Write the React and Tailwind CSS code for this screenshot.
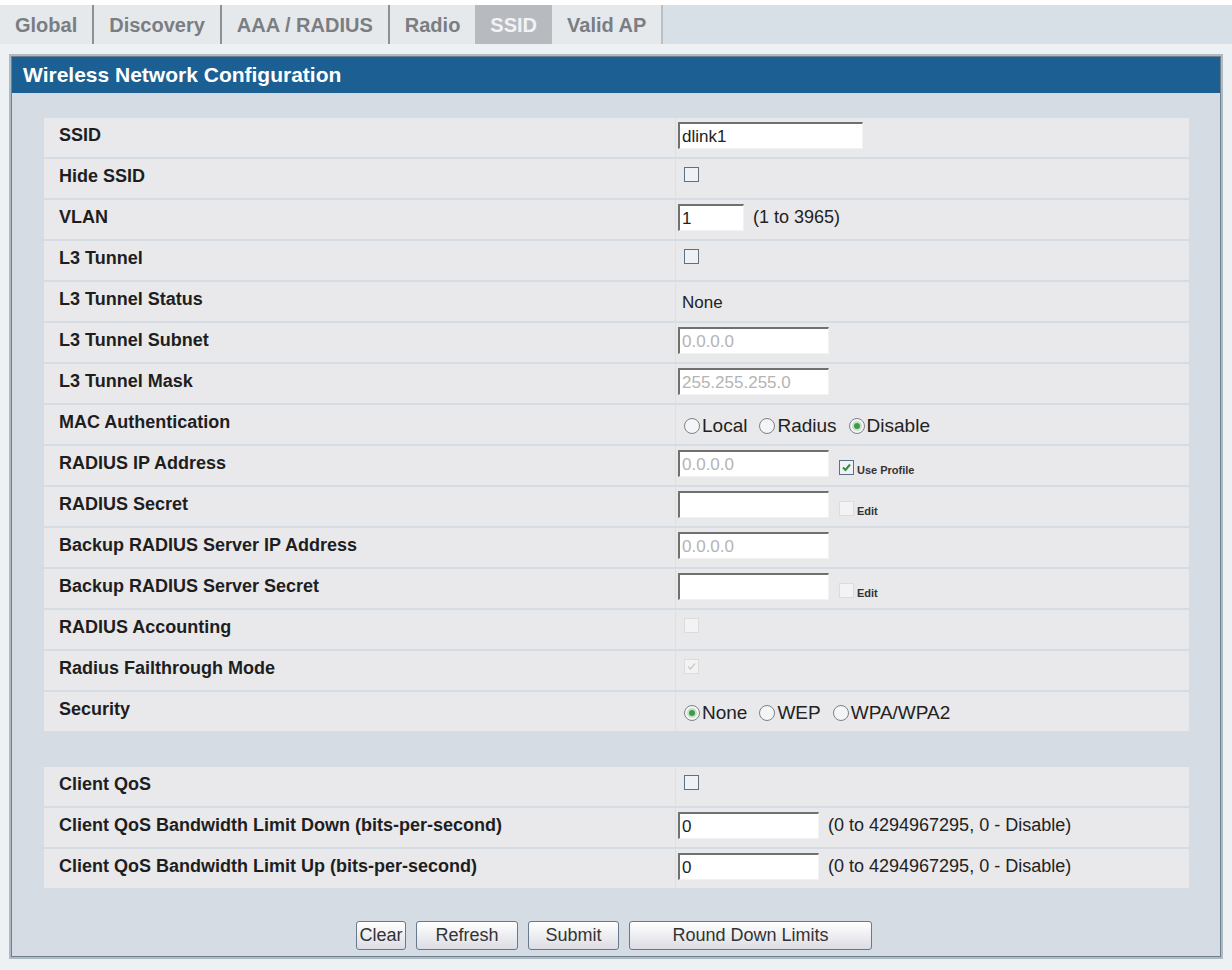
import React from 'react';

const tabs = ['Global', 'Discovery', 'AAA / RADIUS', 'Radio', 'SSID', 'Valid AP'];

// petits contrôles dessinés à la main pour garder le look "vieux navigateur"
const TextBox = ({ value, width, disabled }) => (
    <div
        className={`h-[27px] bg-white border-t-2 border-l-2 border-t-[#707070] border-l-[#707070] border-r border-b border-r-[#f2f2f2] border-b-[#f2f2f2] flex items-center pl-[2px] text-[17px] leading-none ${width} ${disabled ? 'text-[#b4b4b4]' : 'text-[#222]'}`}
    >
        {value}
    </div>
);

const CheckBox = ({ checked, disabled }) => (
    <div
        className={`w-[15px] h-[15px] border flex items-center justify-center ${disabled ? 'border-[#dcdcdc] bg-[#f3f3f3]' : 'border-[#5d7184] bg-[#eef2f5]'}`}
    >
        {checked && (
            <svg width="11" height="11" viewBox="0 0 11 11">
                <path
                    d="M2 5.5 L4.5 8 L9 2.5"
                    fill="none"
                    stroke={disabled ? '#c8c8c8' : '#2f8f3a'}
                    strokeWidth={disabled ? 1.2 : 2}
                />
            </svg>
        )}
    </div>
);

const Radio = ({ label, checked }) => (
    <div className="flex items-center mr-[12px]">
        <div className="w-[16px] h-[16px] rounded-full border border-[#7c8289] bg-[#f4f5f6] flex items-center justify-center mr-[2px]">
            {checked && <div className="w-[6px] h-[6px] rounded-full bg-[#3f9a4c] ring-2 ring-[#c5e3c9]" />}
        </div>
        <span className="text-[19px] text-[#222]">{label}</span>
    </div>
);

const Hint = ({ children }) => <span className="ml-[9px] text-[18px] text-[#222]">{children}</span>;

const Small = ({ children }) => (
    <span className="ml-[3px] mt-[6px] text-[11px] font-bold text-[#333]">{children}</span>
);

const rows = [
    { label: 'SSID', value: <TextBox value="dlink1" width="w-[185px]" /> },
    { label: 'Hide SSID', value: <div className="pl-[6px] pt-[4px]"><CheckBox /></div> },
    { label: 'VLAN', value: <><TextBox value="1" width="w-[66px]" /><Hint>(1 to 3965)</Hint></> },
    { label: 'L3 Tunnel', value: <div className="pl-[6px] pt-[4px]"><CheckBox /></div> },
    { label: 'L3 Tunnel Status', value: <span className="pl-[4px] pt-[4px] text-[17px] text-[#222]">None</span> },
    { label: 'L3 Tunnel Subnet', value: <TextBox value="0.0.0.0" width="w-[151px]" disabled /> },
    { label: 'L3 Tunnel Mask', value: <TextBox value="255.255.255.0" width="w-[151px]" disabled /> },
    {
        label: 'MAC Authentication',
        value: (
            <div className="flex items-center pl-[6px] pt-[3px]">
                <Radio label="Local" />
                <Radio label="Radius" />
                <Radio label="Disable" checked />
            </div>
        ),
    },
    {
        label: 'RADIUS IP Address',
        value: (
            <>
                <TextBox value="0.0.0.0" width="w-[151px]" disabled />
                <div className="ml-[10px] mt-[6px] flex items-center">
                    <CheckBox checked />
                    <Small>Use Profile</Small>
                </div>
            </>
        ),
    },
    {
        label: 'RADIUS Secret',
        value: (
            <>
                <TextBox value="" width="w-[151px]" />
                <div className="ml-[10px] mt-[6px] flex items-center">
                    <CheckBox disabled />
                    <Small>Edit</Small>
                </div>
            </>
        ),
    },
    { label: 'Backup RADIUS Server IP Address', value: <TextBox value="0.0.0.0" width="w-[151px]" disabled /> },
    {
        label: 'Backup RADIUS Server Secret',
        value: (
            <>
                <TextBox value="" width="w-[151px]" />
                <div className="ml-[10px] mt-[6px] flex items-center">
                    <CheckBox disabled />
                    <Small>Edit</Small>
                </div>
            </>
        ),
    },
    { label: 'RADIUS Accounting', value: <div className="pl-[6px] pt-[4px]"><CheckBox disabled /></div> },
    { label: 'Radius Failthrough Mode', value: <div className="pl-[6px] pt-[4px]"><CheckBox checked disabled /></div> },
    {
        label: 'Security',
        value: (
            <div className="flex items-center pl-[6px] pt-[3px]">
                <Radio label="None" checked />
                <Radio label="WEP" />
                <Radio label="WPA/WPA2" />
            </div>
        ),
    },
];

const qosRows = [
    { label: 'Client QoS', value: <div className="pl-[6px] pt-[4px]"><CheckBox /></div> },
    {
        label: 'Client QoS Bandwidth Limit Down (bits-per-second)',
        value: <><TextBox value="0" width="w-[141px]" /><Hint>(0 to 4294967295, 0 - Disable)</Hint></>,
    },
    {
        label: 'Client QoS Bandwidth Limit Up (bits-per-second)',
        value: <><TextBox value="0" width="w-[141px]" /><Hint>(0 to 4294967295, 0 - Disable)</Hint></>,
    },
];

const Row = ({ label, value }) => (
    <div className="flex h-[39px] bg-[#e9e9eb]">
        <div className="w-[631px] pl-[15px] pt-[4px] text-[18px] font-bold text-[#1e1e1e]">{label}</div>
        <div className="flex-1 flex items-start pt-[4px] pl-[2px] border-l border-[#dcdfe3]">{value}</div>
    </div>
);

const Button = ({ children, width }) => (
    <button className={`h-[29px] ${width} rounded-[3px] border border-[#67798b] bg-gradient-to-b from-white to-[#dcdde4] text-[18px] text-[#333]`}>
        {children}
    </button>
);

export default function App() {
    return (
        <div className="w-[1232px] h-[970px] bg-[#eef1f4] font-['Liberation_Sans',Arial,sans-serif] overflow-hidden">
            <div className="h-[5px] bg-white" />

            {/* Onglets */}
            <div className="h-[39px] flex bg-[#d7e0e7]">
                <div className="flex bg-[#e6e9ec]">
                    {tabs.map((tab, i) => {
                        const active = tab === 'SSID';
                        const sep = i < tabs.length - 1 && tab !== 'Radio' && !active;
                        return (
                            <React.Fragment key={tab}>
                                <div
                                    className={`flex items-center px-[15px] text-[20px] font-bold ${active ? 'bg-[#b7bbbf] text-[#f1f3f5]' : 'text-[#7a7e83]'}`}
                                >
                                    {tab}
                                </div>
                                {sep && <div className="w-[2px] bg-[#8c9196]" />}
                            </React.Fragment>
                        );
                    })}
                    <div className="w-[2px] bg-[#b9c1c8]" />
                </div>
            </div>

            <div className="h-[10px]" />

            {/* Panneau principal */}
            <div className="ml-[9px] w-[1214px] h-[905px] border-2 border-[#aebac4] bg-[#aebac4]">
                <div className="h-full border border-[#6f7f8e] bg-[#d6dce3] flex flex-col">
                    <div className="h-[36px] bg-[#1c5f93] flex items-center pl-[11px] text-[21px] font-bold text-white">
                        Wireless Network Configuration
                    </div>

                    <div className="pt-[25px] pl-[32px] pr-[31px]">
                        <div className="flex flex-col gap-[2px]">
                            {rows.map(r => (
                                <Row key={r.label} label={r.label} value={r.value} />
                            ))}
                        </div>

                        <div className="h-[36px]" />

                        <div className="flex flex-col gap-[2px]">
                            {qosRows.map(r => (
                                <Row key={r.label} label={r.label} value={r.value} />
                            ))}
                        </div>

                        {/* Boutons */}
                        <div className="flex justify-center gap-[10px] mt-[33px] pr-[5px]">
                            <Button width="w-[50px]">Clear</Button>
                            <Button width="w-[102px]">Refresh</Button>
                            <Button width="w-[91px]">Submit</Button>
                            <Button width="w-[243px]">Round Down Limits</Button>
                        </div>
                    </div>
                </div>
            </div>
        </div>
    );
}
